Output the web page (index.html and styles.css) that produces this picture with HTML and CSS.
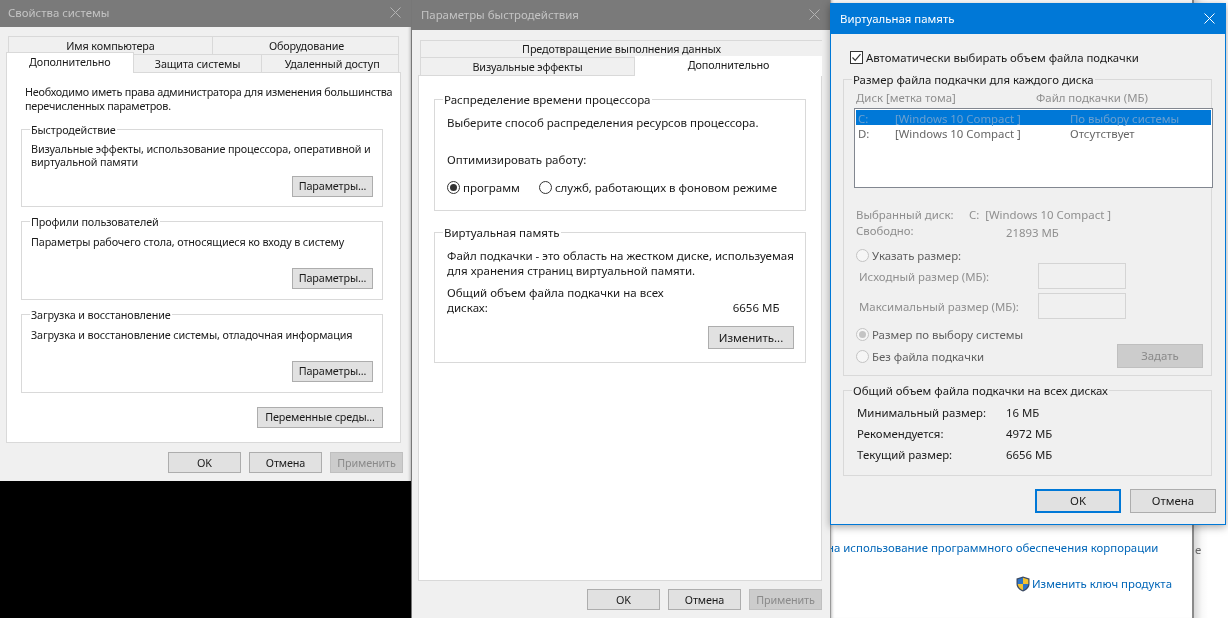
FILE: index.html
```html
<!DOCTYPE html>
<html lang="ru">
<head>
<meta charset="utf-8">
<title>Виртуальная память</title>
<link rel="stylesheet" href="styles.css">
</head>
<body>
<div class="desktop">

  <section class="backwin">
    <p class="link-line">на использование программного обеспечения корпорации</p>
    <p class="key-line">
      <svg class="shield" viewBox="0 0 14 16" width="14" height="16">
        <path d="M7 .5 13.5 2.5V8c0 3.6-2.8 6-6.5 7.5C3.3 14 .5 11.6.5 8V2.5Z" fill="#3c4a63"/>
        <path d="M7 1.8 12.3 3.4V8H7Z" fill="#f2c230"/>
        <path d="M7 1.8 1.7 3.4V8H7Z" fill="#2b73c8"/>
        <path d="M7 8h5.3C12 11 9.800 13 7 14.200Z" fill="#2b73c8"/>
        <path d="M7 8H1.700C2 11 4.200 13 7 14.200Z" fill="#f2c230"/>
      </svg>
      <span>Изменить ключ продукта</span>
    </p>
  </section>
  <div class="backstrip"><span>е</span></div>

  <section class="win win-sys">
    <header class="titlebar inactive"><span>Свойства системы</span><svg class="close" viewBox="0 0 11 11" width="11" height="11"><path d="M.5.5l10 10M10.500.5l-10 10"/></svg></header>
    <div class="tabs">
      <div class="tabrow upper">
        <div class="tab t-name">Имя компьютера</div>
        <div class="tab t-hw">Оборудование</div>
      </div>
      <div class="tabrow lower">
        <div class="tab active t-adv">Дополнительно</div>
        <div class="tab t-prot">Защита системы</div>
        <div class="tab t-rem">Удаленный доступ</div>
      </div>
    </div>
    <div class="panel sys-panel">
      <p class="intro">Необходимо иметь права администратора для изменения большинства<br>перечисленных параметров.</p>
      <div class="group sys-group">
        <h3 class="legend">Быстродействие</h3>
        <p class="g-text">Визуальные эффекты, использование процессора, оперативной и<br>виртуальной памяти</p>
        <div class="g-actions"><button class="btn b-param">Параметры...</button></div>
      </div>
      <div class="group sys-group">
        <h3 class="legend">Профили пользователей</h3>
        <p class="g-text">Параметры рабочего стола, относящиеся ко входу в систему<br>&nbsp;</p>
        <div class="g-actions"><button class="btn b-param">Параметры...</button></div>
      </div>
      <div class="group sys-group">
        <h3 class="legend">Загрузка и восстановление</h3>
        <p class="g-text">Загрузка и восстановление системы, отладочная информация<br>&nbsp;</p>
        <div class="g-actions"><button class="btn b-param">Параметры...</button></div>
      </div>
      <div class="env-row"><button class="btn b-env">Переменные среды...</button></div>
    </div>
    <footer class="dlg-actions">
      <button class="btn b-std">OK</button>
      <button class="btn b-std">Отмена</button>
      <button class="btn b-std disabled">Применить</button>
    </footer>
  </section>

  <section class="win win-perf">
    <header class="titlebar inactive tall"><span>Параметры быстродействия</span><svg class="close" viewBox="0 0 11 11" width="11" height="11"><path d="M.5.5l10 10M10.500.5l-10 10"/></svg></header>
    <div class="tabs perf-tabs">
      <div class="tabrow upper perf-upper">
        <div class="tab t-dep">Предотвращение выполнения данных</div>
      </div>
      <div class="tabrow lower perf-lower">
        <div class="tab t-vis">Визуальные эффекты</div>
        <div class="tab active t-adv2">Дополнительно</div>
      </div>
    </div>
    <div class="panel perf-panel">
      <div class="group perf-g1">
        <h3 class="legend">Распределение времени процессора</h3>
        <p class="p-text first">Выберите способ распределения ресурсов процессора.</p>
        <p class="p-text opt">Оптимизировать работу:</p>
        <div class="radios">
          <span class="radio on"></span><span class="r-label r1">программ</span>
          <span class="radio"></span><span class="r-label">служб, работающих в фоновом режиме</span>
        </div>
      </div>
      <div class="group perf-g2">
        <h3 class="legend">Виртуальная память</h3>
        <p class="p-text first">Файл подкачки - это область на жестком диске, используемая<br>для хранения страниц виртуальной памяти.</p>
        <div class="total">
          <p class="p-text">Общий объем файла подкачки на всех<br>дисках:</p>
          <span class="total-val">6656 МБ</span>
        </div>
        <div class="g-actions perf-act"><button class="btn b-change">Изменить...</button></div>
      </div>
    </div>
    <footer class="dlg-actions perf-actions">
      <button class="btn b-std">OK</button>
      <button class="btn b-std">Отмена</button>
      <button class="btn b-std disabled">Применить</button>
    </footer>
  </section>

  <section class="win win-vm">
    <header class="titlebar vm-title"><span>Виртуальная память</span><svg class="close" viewBox="0 0 11 11" width="11" height="11"><path d="M.5.5l10 10M10.500.5l-10 10"/></svg></header>
    <div class="vm-body">
      <label class="auto">
        <svg class="check" viewBox="0 0 13 13" width="13" height="13"><rect x=".5" y=".5" width="12" height="12" fill="#fff" stroke="#333"/><path d="M2.500 6.500 5.200 9.300 10.500 3.200" fill="none" stroke="#333" stroke-width="1.200"/></svg>
        <span>Автоматически выбирать объем файла подкачки</span>
      </label>
      <div class="group vm-g1">
        <h3 class="legend vm-legend">Размер файла подкачки для каждого диска</h3>
        <div class="cols dim"><span class="c-disk">Диск [метка тома]</span><span>Файл подкачки (МБ)</span></div>
        <div class="listbox">
          <div class="row sel"><span class="c1">C:</span><span class="c2">[Windows 10 Compact ]</span><span>По выбору системы</span></div>
          <div class="row"><span class="c1">D:</span><span class="c2">[Windows 10 Compact ]</span><span>Отсутствует</span></div>
        </div>
        <div class="info dim">
          <div class="info-row"><span class="i-key">Выбранный диск:</span><span>C:&nbsp; [Windows 10 Compact ]</span></div>
          <div class="info-row free"><span class="i-key">Свободно:</span><span class="i-free">21893 МБ</span></div>
        </div>
        <div class="opt-row custom"><span class="radio off"></span><span class="dim2">Указать размер:</span></div>
        <div class="field-row"><span class="f-label dim">Исходный размер (МБ):</span><span class="input"></span></div>
        <div class="field-row second"><span class="f-label dim">Максимальный размер (МБ):</span><span class="input"></span></div>
        <div class="bottom-opts">
          <div class="opts">
            <div class="opt-row"><span class="radio off on"></span><span class="dim2">Размер по выбору системы</span></div>
            <div class="opt-row no-file"><span class="radio off"></span><span class="dim2">Без файла подкачки</span></div>
          </div>
          <button class="btn b-vm disabled">Задать</button>
        </div>
      </div>
      <div class="group vm-g2">
        <h3 class="legend vm-legend">Общий объем файла подкачки на всех дисках</h3>
        <div class="sum"><span class="s-key">Минимальный размер:</span><span>16 МБ</span></div>
        <div class="sum"><span class="s-key">Рекомендуется:</span><span>4972 МБ</span></div>
        <div class="sum"><span class="s-key">Текущий размер:</span><span>6656 МБ</span></div>
      </div>
      <footer class="vm-actions">
        <button class="btn b-vm primary">OK</button>
        <button class="btn b-vm">Отмена</button>
      </footer>
    </div>
  </section>
</div>
</body>
</html>
```
FILE: styles.css
```css
* { box-sizing: border-box; }
html, body { margin: 0; padding: 0; }
body { width: 1228px; height: 618px; overflow: hidden; background: #fff; font-family: "Noto Sans", "Open Sans", sans-serif; font-size: 11.4px; color: #1a1a1a; }
p, h3 { margin: 0; font-size: inherit; font-weight: 400; line-height: 15px; }
.desktop { position: relative; width: 1228px; height: 618px; overflow: hidden; background: #fff; filter: blur(.3px); }

/* windows on the desktop */
.win { position: absolute; background: #f0f0f0; display: flex; flex-direction: column; }
.win-sys { left: 0; top: 0; width: 411px; height: 481px; box-shadow: 1px 0 0 #7a7a7a, inset -4px 0 3px -3px rgba(0,0,0,.25); z-index: 1; font-size: 10.8px; letter-spacing: -.12px; }
.desktop::before { content: ""; position: absolute; left: 0; top: 481px; width: 412px; height: 137px; background: #000; }
.win-perf { left: 412px; top: 0; width: 418px; height: 618px; z-index: 2; box-shadow: -1px 0 0 #777; font-size: 11.5px; }
.win-vm { left: 830px; top: 3px; width: 396px; height: 522px; z-index: 3; border: 1px solid #0078d7; border-top: 0; box-shadow: 0 2px 8px rgba(0,0,0,.35); }

.backwin { position: absolute; left: 830px; top: 0; width: 364px; height: 618px; background: #fff; border-left: 1px solid #999; border-right: 2px solid #8a8a8a; padding-top: 539px; overflow: hidden; color: #0066b8; box-shadow: 3px 0 3px -2px rgba(0,0,0,.25) inset; }
.link-line { white-space: nowrap; margin-left: -4px; line-height: 18px; }
.key-line { margin: 19px 0 0 185px; display: flex; align-items: center; gap: 2px; white-space: nowrap; line-height: 16px; }
.shield { flex: none; }
.backstrip { position: absolute; left: 1194px; top: 0; width: 34px; height: 618px; background: linear-gradient(to right, #d8d8d8, #f8f8f8 8px, #fff 14px); color: #666; padding: 542px 0 0 1px; line-height: 16px; }

/* title bars */
.titlebar { flex: none; height: 27px; background: #7a7a7a; color: #c4c4c4; padding: 0 10px 2px 8px; display: flex; align-items: center; justify-content: space-between; font-size: 11.4px; letter-spacing: 0; }
.titlebar.tall { height: 30px; padding: 0 10px 1px 9px; }
.vm-title { height: 31px; background: #0078d7; color: #fff; padding: 0 10px 0 9px; }
.close { stroke: #b3b3b3; stroke-width: 1; fill: none; }
.vm-title .close { stroke: #fff; }

/* tabs */
.tabs { flex: none; padding: 9px 12px 0 6px; height: 45px; position: relative; }
.perf-tabs, .perf-actions { font-size: 10.8px; letter-spacing: -.12px; }
.tabrow { display: flex; }
.tab { text-align: center; background: #f0f0f0; border: 1px solid #d9d9d9; line-height: 17px; white-space: nowrap; }
.upper { height: 18px; padding-left: 2px; }
.upper .tab { height: 18px; border-bottom: 0; }
.lower { height: 18px; }
.lower .tab { height: 18px; border-bottom: 0; margin-left: -1px; }
.lower .tab.active { background: #fff; height: 21px; margin: -2px 0 -1px 0; position: relative; z-index: 1; border-bottom: 0; line-height: 18px; }
.t-name { width: 205px; }
.t-hw { width: 187px; margin-left: -1px; padding-left: 2px; }
.t-adv { width: 128px; }
.t-prot { width: 130px; }
.t-rem { width: 138px; padding-left: 4px; }

/* panels and groups */
.panel { background: #fff; border: 1px solid #d9d9d9; }
.sys-panel { margin: 0 10px 0 6px; height: 371px; padding: 12px 17px 0 14px; }
.intro { margin: 0 0 0 4px; line-height: 14px; height: 29px; white-space: nowrap; letter-spacing: -.23px; }
.group { border: 1px solid #d9d9d9; }
.legend { display: table; background: #fff; margin: -8px 0 0 8px; padding: 0 1px; line-height: 15px; white-space: nowrap; }
.vm-legend { background: #f0f0f0; }
.sys-group { height: 79px; margin-top: 14px; }
.sys-group:first-of-type { margin-top: 15px; height: 78px; }
.g-text { margin: 6px 0 0 9px; line-height: 13px; height: 27px; white-space: nowrap; }
.sys-group:first-of-type .g-text { margin-top: 5px; height: 28px; }
.g-actions { display: flex; justify-content: flex-end; padding-right: 9px; margin-top: 6px; }
.btn { font: inherit; letter-spacing: inherit; color: #1a1a1a; background: #e1e1e1; border: 1px solid #adadad; padding: 0; margin: 0; line-height: 1; }
.b-param { width: 81px; height: 21px; }
.env-row { display: flex; justify-content: flex-end; margin-top: 14px; }
.b-env { width: 126px; height: 21px; }
.dlg-actions { display: flex; justify-content: flex-end; gap: 8px; padding: 9px 8px 0 0; }
.b-std { width: 73px; height: 21px; padding-top: 1px; }
.disabled { background: #ccc; color: #8a8a8a; border-color: #bfbfbf; }

/* performance window */
.perf-tabs { height: 45px; padding: 10px 0 0 8px; }
.perf-upper { padding: 0; height: 17px; }
.perf-upper .tab { width: 402px; height: 17px; border-bottom: 0; line-height: 15px; border-right: 0; }
.perf-lower .t-vis { width: 215px; margin-left: 0; height: 18px; }
.perf-lower { height: 18px; }
.t-adv2 { width: 187px; border-top: 0 !important; border-left: 0 !important; border-right: 0 !important; margin-top: -1px !important; height: 20px !important; }
.perf-panel { margin: 0 8px 0 6px; height: 506px; padding: 23px 15px 0 15px; }
.perf-g1 { height: 112px; }
.perf-g2 { height: 131px; margin-top: 21px; }
.p-text { margin-left: 12px; white-space: nowrap; }
.p-text.first { margin-top: 8px; }
.p-text.opt { margin-top: 22px; }
.radios { display: flex; align-items: center; margin: 13px 0 0 12px; height: 15px; }
.radio { flex: none; display: inline-block; width: 13px; height: 13px; border: 1px solid #333; border-radius: 50%; background: #fff; margin-right: 3px; position: relative; }
.radio.on::after { content: ""; position: absolute; left: 2px; top: 2px; width: 7px; height: 7px; border-radius: 50%; background: #333; }
.radio.off { border-color: #c4c4c4; background: #f6f6f6; }
.radio.off.on::after { background: #c4c4c4; }
.r1 { margin-right: 19px; }
.r-label { white-space: nowrap; }
.total { display: flex; align-items: flex-end; margin-top: 7px; }
.total-val { margin-left: 69px; line-height: 15px; }
.perf-act { padding-right: 11px; margin-top: 11px; }
.b-change { width: 86px; height: 23px; }
.perf-actions { padding: 8px 8px 0 0; }

/* virtual memory window */
.vm-body { flex: 1; padding: 16px 13px 0 12px; display: flex; flex-direction: column; }
.auto { display: flex; align-items: center; gap: 3px; margin-left: 7px; height: 15px; }
.check { flex: none; }
.vm-g1 { height: 297px; margin-top: 14px; }
.cols { display: flex; margin: 3px 0 0 12px; line-height: 15px; }
.c-disk { width: 180px; }
.dim { color: #8f8f8f; }
.dim2 { color: #5f5f5f; }
.listbox { margin: 3px -2px 0 10px; height: 80px; background: #fff; border: 1px solid #828790; padding: 1px; position: relative; }
.row { display: flex; height: 15px; line-height: 17px; padding-left: 2px; white-space: nowrap; color: #666; }
.row.sel { background: #0078d7; color: #6ba0d0; }
.c1 { width: 37px; }
.c2 { width: 175px; }
.info { margin: 19px 0 0 12px; }
.info-row { display: flex; line-height: 15px; }
.i-key { width: 113px; }
.free { margin-top: 1px; }
.i-free { margin: 2px 0 0 37px; }
.opt-row { display: flex; align-items: center; height: 15px; margin-left: 12px; white-space: nowrap; }
.custom { margin-top: 8px; }
.field-row { display: flex; align-items: center; height: 26px; margin: 0 0 0 15px; }
.f-label { width: 179px; white-space: nowrap; }
.input { width: 88px; height: 26px; border: 1px solid #d4d4d4; background: #f0f0f0; display: block; }
.second { margin-top: 4px; }
.bottom-opts { display: flex; justify-content: space-between; align-items: flex-start; margin-top: 8px; padding-right: 8px; }
.no-file { margin-top: 7px; }
.b-vm { width: 86px; height: 24px; }
.bottom-opts .b-vm { margin-top: 17px; }
.vm-g2 { height: 86px; margin-top: 14px; }
.sum { display: flex; line-height: 21px; margin-left: 13px; white-space: nowrap; }
.legend + .sum { margin-top: 4px; }
.s-key { width: 149px; }
.vm-actions { display: flex; justify-content: flex-end; gap: 9px; margin-top: 13px; margin-right: -4px; }
.primary { border: 2px solid #0078d7; }
```
